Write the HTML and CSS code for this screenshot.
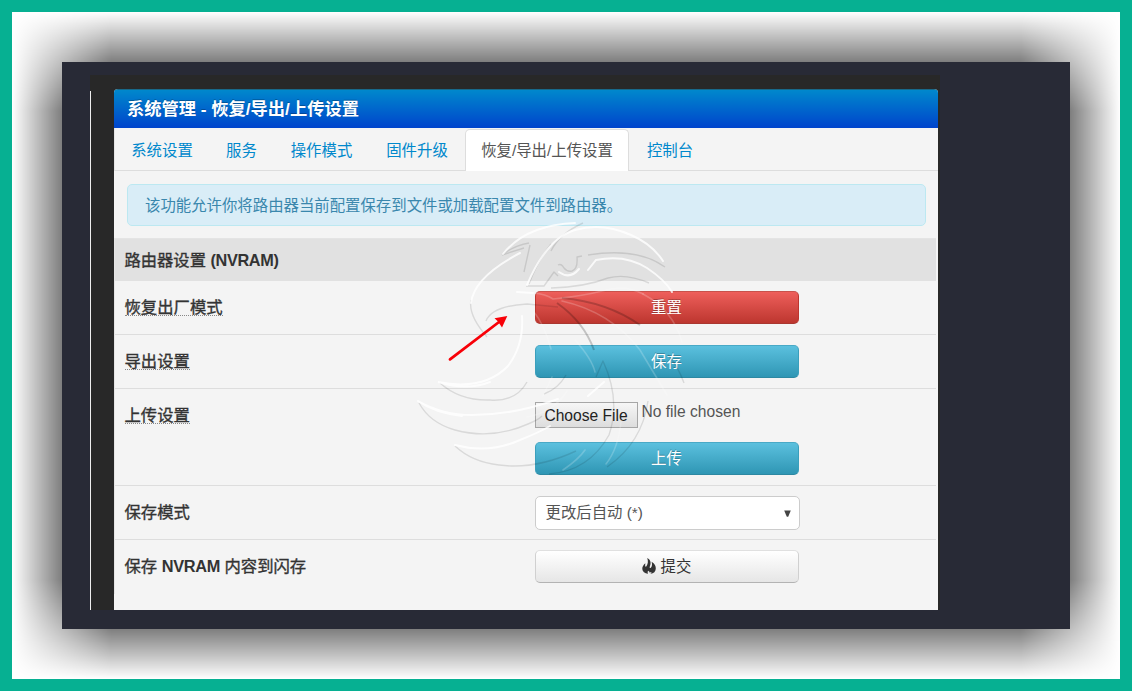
FILE: index.html
```html
<!DOCTYPE html>
<html lang="zh-CN">
<head>
<meta charset="utf-8">
<title>系统管理</title>
<link rel="stylesheet" href="styles.css">
</head>
<body>
<main class="frame">
  <div class="shot">
    <section class="panel">
      <h1 class="title">系统管理 - 恢复/导出/上传设置</h1>
      <nav class="tabs">
        <a class="tab tab-system">系统设置</a>
        <a class="tab tab-service">服务</a>
        <a class="tab tab-mode">操作模式</a>
        <a class="tab tab-firmware">固件升级</a>
        <a class="tab tab-restore active">恢复/导出/上传设置</a>
        <a class="tab tab-console">控制台</a>
      </nav>
      <p class="alert">该功能允许你将路由器当前配置保存到文件或加载配置文件到路由器。</p>
      <div class="table">
        <h2 class="section">路由器设置 <b class="latin">(NVRAM)</b></h2>
        <div class="row"><div class="label"><span class="hint">恢复出厂模式</span></div><button class="btn danger">重置</button></div>
        <div class="row"><div class="label"><span class="hint">导出设置</span></div><button class="btn info">保存</button></div>
        <div class="row tall">
          <div class="label"><span class="hint">上传设置</span></div>
          <div class="upload">
            <div class="file"><button class="choose">Choose File</button><span class="nofile">No file chosen</span></div>
            <button class="btn info">上传</button>
          </div>
        </div>
        <div class="row"><div class="label">保存模式</div><div class="select"><span>更改后自动 (*)</span><svg width="7" height="7" viewBox="0 0 7 7"><path d="M.2.5h6.600L4.200 6.700H2.800z" fill="#444"/></svg></div></div>
        <div class="row last"><div class="label">保存 <b class="latin">NVRAM</b> 内容到闪存</div><button class="btn plain"><svg class="fire" width="14" height="16" viewBox="0 0 14 16"><path d="M5.200 0C8.700 1.800 9.300 4.800 7.900 8.200l-.3 1.500 1.100.3c1.400-1.700 1.700-3.600.9-6.300 3.200 1.800 4.300 4.300 4.200 6.800-.1 3-2 5-5.300 5.300l1.200-1.700-2.200.3-.6-1.700-1.400 1.100.5 2C2.800 15.300.4 13.800.3 11 .2 8.700 1.400 7.200 3.300 5.300L3.100 8.400l1.200.1C6 5.900 6.400 3.200 5.200 0z" fill="#333"/></svg>提交</button></div>
      </div>
    </section>
  </div>
</main>
<svg class="overlay" width="1132" height="691" viewBox="0 0 1132 691">
  <g class="dark-lines">
    <path d="M502 255Q513 246 529 243M502 255L524 248M530 245L524 272M551 251Q559 234 583 223"/>
    <path d="M526 286H544L554 272L558 276M529 284Q537 262 551 244"/>
    <path d="M558 265Q561 263 564 268Q567 272 572 271Q578 269 577 257L582 256M588 255Q637 247 665 267M551 288Q585 287 608 278Q626 273 649 283"/>
    <path d="M471 300Q468 315 487 337M486 321Q492 306 527 304L558 307"/>
    <path class="deep" d="M562 298Q607 302 640 325M557 303Q584 322 594 350"/>
    <path d="M440 383Q460 401 490 400Q516 402 527 382M544 394Q558 389 566 375"/>
    <path d="M419 403Q430 423 455 430Q492 440 528 424Q538 420 542 416"/>
    <path d="M455 446Q472 462 499 465Q535 470 576 451M549 474Q589 471 609 435Q621 400 603 361L596 377"/>
    <path d="M607 467Q642 443 648 401M684 383Q678 366 668 355"/>
  </g>
  <g class="light-lines">
    <path d="M503 254Q526 225 575 223M527 285Q547 238 575 230Q602 222 631 235Q652 244 663 261"/>
    <path d="M520 253Q474 277 471 303M559 272Q570 280 579 269M588 270L596 260Q625 254 647 268Q665 280 672 292"/>
    <path d="M517 292L533 293"/>
    <path class="faint" d="M533 293Q546 294 553 299Q583 296 602 291Q625 284 643 294"/>
    <path class="faint" d="M534 312Q544 324 551 349M562 301Q611 312 640 350L667 395M643 294Q673 310 682 342"/>
    <path class="faint" d="M527 417Q554 412 567 391M606 464Q618 449 621 422M575 340Q592 359 595 372M563 470Q579 459 585 450M543 396L552 377"/>
    <path d="M522 316Q524 345 508 366Q484 391 438 382Q467 391 490 382"/>
    <path d="M418 401Q443 415 472 415Q514 415 558 399M418 401Q435 413 462 416"/>
    <path d="M455 445Q489 454 520 440Q540 432 550 426M588 396L604 382"/>
  </g>
  <path d="M450 359.300L499 322" stroke="#f80008" stroke-width="2.800" stroke-linecap="round"/>
  <path d="M507.300 316L494.500 318.200L498 321.500L502 327.500z" fill="#f80008"/>
</svg>
</body>
</html>
```
FILE: styles.css
```css
* { box-sizing: border-box; }
body {
  position: relative;
  isolation: isolate;
  margin: 0;
  width: 1132px;
  height: 691px;
  overflow: hidden;
  padding: 50px;
  border: 12px solid #06b092;
  font: 15.4px/20px "Liberation Sans", "Noto Sans CJK SC", sans-serif;
  color: #555;
}
html { background: #fff; }
/* Linear shadow that fades toward all four edges */
body::before {
  content: "";
  position: absolute;
  inset: 0;
  z-index: -1;
  background: #000;
  mask-image:
    linear-gradient(90deg, transparent, #000 99px, #000 calc(100% - 99px), transparent),
    linear-gradient(transparent, #000 99px, #000 calc(100% - 99px), transparent);
  mask-composite: intersect;
}
h1, h2, p { margin: 0; }
button { font: inherit; margin: 0; }
.frame {
  width: 1008px;
  height: 567px;
  padding: 13px 0 19px 28px;
  background: #282a36;
}
.shot {
  width: 850px;
  height: 535px;
  padding: 14px 2px 0 24px;
  background: linear-gradient(#eee, #eee) 0 16px / 1px 100% no-repeat, #282828;
}
.panel {
  height: 521px;
  background: #f4f4f4;
  border-radius: 4px 4px 0 0;
  overflow: hidden;
}
.title {
  height: 39px;
  padding: 0 13px;
  font-size: 17.25px;
  line-height: 38px;
  font-weight: 700;
  color: #fff;
  background: linear-gradient(#08c, #04c);
  border-top: 1px solid #18698a;
  text-shadow: 0 -1px 0 rgba(0, 0, 0, .25);
}
.tabs {
  display: flex;
  height: 43px;
  padding-top: 1px;
  border-bottom: 1px solid #ddd;
  border-left: 1px solid #e5e5e5;
  color: #08c;
}
.tab {
  height: 42px;
  line-height: 43px;
  white-space: nowrap;
  text-align: center;
}
.tab-system { width: 94px; }
.tab-service { width: 65px; }
.tab-mode { width: 95px; }
.tab-firmware { width: 96px; }
.tab-restore { width: 164px; }
.tab-console { width: 82px; }
.active {
  border: 1px solid #ddd;
  border-bottom: 0;
  border-radius: 5px 5px 0 0;
  background: #fff;
  line-height: 41px;
  color: #555;
}
.alert {
  height: 42px;
  margin: 13px 12px 12px 13px;
  padding-left: 17px;
  border: 1px solid #bce8f1;
  border-radius: 5px;
  background: #d9edf7;
  line-height: 41px;
  color: #3a87ad;
}
.table { margin-right: 2px; border-left: 1px solid #e5e5e5; }
.section {
  height: 43px;
  padding-left: 9.5px;
  border-top: 1px solid #e4e4e4;
  background: #e1e1e1;
  font-size: 16.3px;
  line-height: 42px;
  font-weight: 400;
  -webkit-text-stroke: .35px #333;
  color: #333;
}
.latin { letter-spacing: -.35px; -webkit-text-stroke: 0; }
.row {
  display: flex;
  height: 54px;
  padding: 9px 0 0 9.5px;
  border-bottom: 1px solid #ddd;
}
.tall { height: 97px; }
.last { border-bottom: 0; }
.label {
  width: 410px;
  flex: none;
  font-size: 16.35px;
  line-height: 34px;
  -webkit-text-stroke: .35px #333;
  color: #333;
}
.hint {
  display: inline-block;
  height: 18px;
  line-height: 18px;
  border-bottom: 1px dotted #888;
}
.btn {
  display: flex;
  align-items: center;
  justify-content: center;
  width: 264px;
  height: 33px;
  margin-top: .5px;
  padding: 2px 0 0;
  border: 1px solid #2f96b4;
  border-radius: 5px;
  color: #fff;
}
.danger { background: linear-gradient(#ee5f5b, #bd362f); border-color: #c8524c #bd362f #a93730; }
.info { background: linear-gradient(#5bc0de, #2f96b4); border-color: #49a9c6 #3b9fbc #2d88a2; }
.danger, .info { text-shadow: 0 -1px 0 rgba(0, 0, 0, .25); }
.plain { background: linear-gradient(#fff, #e6e6e6); border-color: #e0e0e0 #d0d0d0 #b3b3b3; color: #333; }
.fire { margin: -2px 5px 0 0; }
.file { display: flex; height: 43px; padding-top: 4px; font-size: 15.6px; }
.choose {
  width: 103px;
  height: 26px;
  padding: 1px 0 0;
  border: 1px solid #a6a6a6;
  background: linear-gradient(#f6f6f6, #ddd);
  color: #222;
}
.nofile { margin: 0 0 0 4px; }
.select {
  display: flex;
  align-items: center;
  justify-content: space-between;
  width: 265px;
  height: 34px;
  margin-top: .5px;
  padding: 1px 8px 0 10px;
  border: 1px solid #ccc;
  border-radius: 5px;
  background: #fff;
}
.overlay { position: absolute; left: -12px; top: -12px; pointer-events: none; fill: none; }
.dark-lines { stroke: #000; stroke-opacity: .11; stroke-width: 1.4; stroke-linejoin: round; }
.deep { stroke-opacity: .2; stroke-width: 2; }
.light-lines { stroke: #fff; stroke-opacity: .8; stroke-width: 2; stroke-linecap: round; }
.faint { stroke-opacity: .2; stroke-width: 1.6; }
```
